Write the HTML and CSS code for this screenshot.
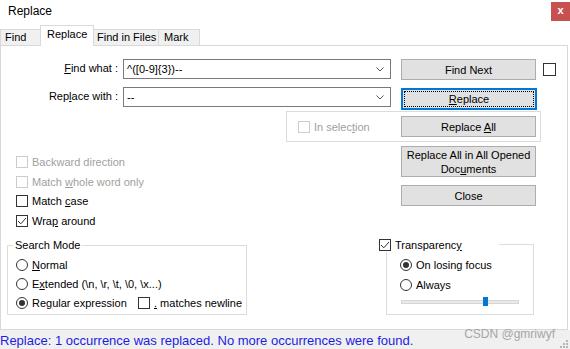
FILE: index.html
```html
<html><head>
<link rel="stylesheet" href="styles.css">
</head>
<body>
<div class="window">
    <div class="titlebar">
        <span class="title">Replace</span>
        <span class="close">x</span>
    </div>

    <div class="tabs">
        <div class="tab tab-find">Find</div>
        <div class="tab tab-replace active">Replace</div>
        <div class="tab tab-files">Find in Files</div>
        <div class="tab tab-mark">Mark</div>
    </div>

    <div class="panel">
        <div class="row row-find">
            <span class="field-label"><u>F</u>ind what :</span>
            <div class="combo">
                <span class="combo-text">^([0-9]{3})--</span>
                <svg class="chev" viewBox="0 0 8 5"><polyline points="0.5,0.5 4,4 7.5,0.5" fill="none" stroke="#555" stroke-width="1"></polyline></svg>
            </div>
            <button class="btn">Find Next</button>
            <span class="box box-top"></span>
        </div>

        <div class="row row-replace">
            <span class="field-label">Rep<u>l</u>ace with :</span>
            <div class="combo">
                <span class="combo-text">--</span>
                <svg class="chev" viewBox="0 0 8 5"><polyline points="0.5,0.5 4,4 7.5,0.5" fill="none" stroke="#555" stroke-width="1"></polyline></svg>
            </div>
            <button class="btn btn-focus"><u>R</u>eplace</button>
        </div>

        <div class="selbox">
            <span class="sel-label"><span class="cb disabled"></span><span>In selec<u>t</u>ion</span></span>
            <button class="btn">Replace <u>A</u>ll</button>
        </div>

        <div class="middle">
            <div class="opts">
                <div class="check-row muted"><span class="cb disabled"></span><span>Backward direction</span></div>
                <div class="check-row muted"><span class="cb disabled"></span><span>Match <u>w</u>hole word only</span></div>
                <div class="check-row"><span class="cb"></span><span>Match <u>c</u>ase</span></div>
                <div class="check-row"><span class="cb"><svg viewBox="0 0 10 10"><polyline points="1,5 3.8,7.8 9,2" fill="none" stroke="#333" stroke-width="1"></polyline></svg></span><span>Wra<u>p</u> around</span></div>
            </div>
            <div class="btncol">
                <button class="btn btn-tall">Replace All in All Opened Doc<u>u</u>ments</button>
                <button class="btn">Close</button>
            </div>
        </div>

        <div class="groups">
            <div class="group group-search">
                <span class="group-title">Search Mode</span>
                <div class="radio-row"><span class="radio"></span><span><u>N</u>ormal</span></div>
                <div class="radio-row"><span class="radio"></span><span>E<u>x</u>tended (\n, \r, \t, \0, \x...)</span></div>
                <div class="radio-row">
                    <span class="radio on"></span><span class="regex-label">Re<u>g</u>ular expression</span>
                    <span class="cb"></span><span><u>.</u> matches newline</span>
                </div>
            </div>

            <div class="group group-trans">
                <span class="group-title trans-title">
                    <span class="cb"><svg viewBox="0 0 10 10"><polyline points="1,5 3.8,7.8 9,2" fill="none" stroke="#333" stroke-width="1"></polyline></svg></span><span>Transparenc<u>y</u></span>
                </span>
                <div class="radio-row tr-row"><span class="radio on"></span><span>On losing focus</span></div>
                <div class="radio-row tr-row"><span class="radio"></span><span>Always</span></div>
                <div class="slider">
                    <div class="track"></div>
                    <span class="thumb"></span>
                </div>
            </div>
        </div>
    </div>

    <div class="status">Replace: 1 occurrence was replaced. No more occurrences were found.</div>
    <span class="watermark">CSDN @gmriwyf</span>
    <svg class="grip" viewBox="0 0 8 8">
        <rect x="6" y="0" width="2" height="2" fill="#b5b5b5"></rect>
        <rect x="3" y="3" width="2" height="2" fill="#b5b5b5"></rect>
        <rect x="6" y="3" width="2" height="2" fill="#b5b5b5"></rect>
        <rect x="0" y="6" width="2" height="2" fill="#b5b5b5"></rect>
        <rect x="3" y="6" width="2" height="2" fill="#b5b5b5"></rect>
        <rect x="6" y="6" width="2" height="2" fill="#b5b5b5"></rect>
    </svg>
</div>
</body>
</html>
```

FILE: styles.css
```css
* {
    box-sizing: border-box;
}

body {
    margin: 0;
    background: #ffffff;
    font-family: "Liberation Sans", Arial, sans-serif;
    font-size: 11px;
    color: #000;
}

.window {
    position: relative;
    width: 570px;
    height: 349px;
    overflow: hidden;
}

.titlebar {
    height: 25px;
    display: flex;
    justify-content: space-between;
    align-items: flex-start;
}

.title {
    font-size: 12px;
    line-height: 16px;
    padding: 3px 0 0 8px;
}

.close {
    width: 19px;
    height: 19px;
    margin-top: 2px;
    background: #c75050;
    color: #fff;
    font-weight: bold;
    font-size: 11px;
    line-height: 17px;
    text-align: center;
}

/* tabs */
.tabs {
    display: flex;
    align-items: flex-end;
    height: 20px;
}

.tab {
    height: 16px;
    border: 1px solid #d9d9d9;
    border-bottom: none;
    background: #f0f0f0;
    line-height: 15px;
    margin-left: -1px;
}

.tab-find { width: 41px; margin-left: 0; padding-left: 4px; }
.tab-replace { width: 54px; padding-left: 6px; }
.tab-files { width: 66px; padding-left: 3px; }
.tab-mark { width: 42px; padding-left: 5px; }

.tab.active {
    height: 21px;
    margin-bottom: -1px;
    background: #fff;
    position: relative;
    z-index: 1;
    line-height: 17px;
}

/* main panel */
.panel {
    width: 568px;
    height: 285px;
    border: 1px solid #d9d9d9;
    padding-top: 13px;
}

.row {
    display: flex;
    align-items: flex-start;
}

.row-find { height: 28px; }
.row-replace { height: 24px; }

.field-label {
    width: 117px;
    text-align: right;
    line-height: 19px;
}

.combo {
    margin-left: 5px;
    width: 268px;
    height: 20px;
    border: 1px solid #7a7a7a;
    display: flex;
    align-items: center;
    padding: 0 6px 0 3px;
}

.combo-text {
    flex: 1;
}

.chev {
    width: 8px;
    height: 5px;
}

.btn {
    width: 135px;
    height: 21px;
    padding: 0;
    background: #e1e1e1;
    border: 1px solid #adadad;
    font-family: inherit;
    font-size: 11px;
    color: #000;
    line-height: 14px;
}

.row .btn {
    margin-left: 10px;
}

.btn-focus {
    width: 136px;
    height: 22px;
    margin-top: 1px;
    border: 2px solid #0078d7;
    outline: 1px dotted #000;
    outline-offset: -4px;
}

.box-top {
    width: 13px;
    height: 13px;
    margin: 4px 0 0 7px;
    border: 1px solid #333;
}

.selbox {
    margin-left: 285px;
    width: 255px;
    height: 31px;
    border: 1px solid #dcdcdc;
    display: flex;
    align-items: flex-start;
    padding: 4px 0 0 11px;
}

.sel-label {
    width: 103px;
    height: 21px;
    display: flex;
    align-items: center;
    color: #a0a0a0;
}

/* checkboxes and radios */
.cb {
    width: 12px;
    height: 12px;
    border: 1px solid #333;
    background: #fff;
    margin-right: 4px;
    flex-shrink: 0;
}

.cb svg {
    display: block;
    width: 10px;
    height: 10px;
}

.cb.disabled {
    border-color: #cccccc;
}

.radio {
    width: 12px;
    height: 12px;
    border: 1px solid #333;
    border-radius: 50%;
    margin-right: 4px;
    display: flex;
    align-items: center;
    justify-content: center;
    flex-shrink: 0;
}

.radio.on::after {
    content: "";
    width: 6px;
    height: 6px;
    border-radius: 50%;
    background: #333;
}

.middle {
    display: flex;
    height: 102px;
}

.opts {
    width: 400px;
    padding: 10px 0 0 15px;
}

.check-row {
    height: 19.7px;
    display: flex;
    align-items: center;
}

.muted {
    color: #a0a0a0;
}

.btncol {
    display: flex;
    flex-direction: column;
    gap: 8px;
    padding-top: 4px;
}

.btn-tall {
    height: 31px;
}

/* group boxes */
.groups {
    display: flex;
    align-items: flex-start;
}

.group {
    position: relative;
    border: 1px solid #dcdcdc;
}

.group-title {
    position: absolute;
    top: -8px;
    left: 5px;
    padding: 0 2px;
    background: #fff;
    line-height: 14px;
}

.group-search {
    margin: 1px 0 0 6px;
    width: 240px;
    height: 70px;
    padding: 9px 0 0 8px;
}

.radio-row {
    height: 19.4px;
    display: flex;
    align-items: center;
}

.regex-label {
    width: 106px;
}

.group-trans {
    margin-left: 139px;
    width: 148px;
    height: 71px;
    padding: 10px 0 0 13px;
}

.trans-title {
    top: -7px;
    left: -8px;
    width: 120px;
    padding: 0;
    display: flex;
    align-items: center;
}

.tr-row {
    height: 20px;
}

.slider {
    position: relative;
    width: 118px;
    height: 9px;
    margin: 2px 0 0 1px;
    padding-top: 3px;
}

.track {
    height: 4px;
    background: #e7eaea;
    border: 1px solid #d6d6d6;
}

.thumb {
    position: absolute;
    left: 82px;
    top: 0;
    width: 5px;
    height: 9px;
    background: #0078d7;
}

/* status bar */
.status {
    height: 19px;
    background: #f0f0f0;
    color: #1c1ce3;
    font-size: 13px;
    line-height: 18px;
    padding-top: 2px;
    white-space: nowrap;
}

.watermark {
    position: absolute;
    right: 15px;
    top: 327px;
    font-size: 12px;
    line-height: 14px;
    color: #a6a6a6;
}

.grip {
    position: absolute;
    right: 2px;
    bottom: 1px;
    width: 8px;
    height: 8px;
}
```
